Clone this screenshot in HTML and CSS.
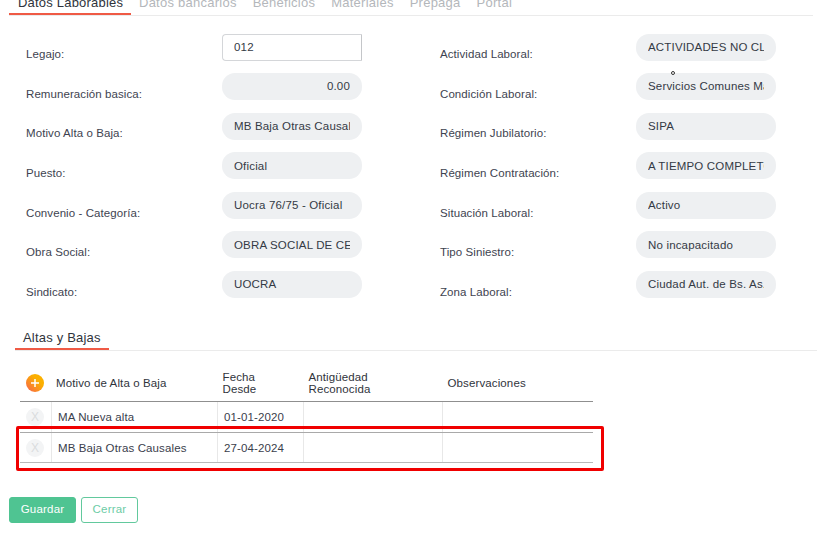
FILE: index.html
```html
<!DOCTYPE html>
<html lang="es">
<head>
<meta charset="utf-8">
<title>Datos Laborables</title>
<link rel="stylesheet" href="styles.css">
</head>
<body>
<main class="page">
  <nav class="tabs">
    <a class="tab tab-active">Datos Laborables</a>
    <a class="tab">Datos bancarios</a>
    <a class="tab">Beneficios</a>
    <a class="tab">Materiales</a>
    <a class="tab">Prepaga</a>
    <a class="tab">Portal</a>
  </nav>

  <section class="form-grid">
    <div class="field"><label>Legajo:</label><input class="input input-edit" value="012"></div>
    <div class="field"><label>Actividad Laboral:</label><input class="input" readonly value="ACTIVIDADES NO CLASIFICADAS"></div>
    <div class="field"><label>Remuneración basica:</label><input class="input input-num" readonly value="0.00"></div>
    <div class="field"><label>Condición Laboral:</label><input class="input" readonly value="Servicios Comunes Mayor de 18"></div>
    <div class="field"><label>Motivo Alta o Baja:</label><input class="input" readonly value="MB Baja Otras Causales"></div>
    <div class="field"><label>Régimen Jubilatorio:</label><input class="input" readonly value="SIPA"></div>
    <div class="field"><label>Puesto:</label><input class="input" readonly value="Oficial"></div>
    <div class="field"><label>Régimen Contratación:</label><input class="input" readonly value="A TIEMPO COMPLETO"></div>
    <div class="field"><label>Convenio - Categoría:</label><input class="input" readonly value="Uocra 76/75 - Oficial"></div>
    <div class="field"><label>Situación Laboral:</label><input class="input" readonly value="Activo"></div>
    <div class="field"><label>Obra Social:</label><input class="input" readonly value="OBRA SOCIAL DE CERAMISTAS"></div>
    <div class="field"><label>Tipo Siniestro:</label><input class="input" readonly value="No incapacitado"></div>
    <div class="field"><label>Sindicato:</label><input class="input" readonly value="UOCRA"></div>
    <div class="field"><label>Zona Laboral:</label><input class="input" readonly value="Ciudad Aut. de Bs. As."></div>
  </section>

  <div class="subtabs"><a class="subtab">Altas y Bajas</a></div>

  <table class="grid">
    <colgroup>
      <col class="c-x"><col class="c-motivo"><col class="c-fecha"><col class="c-ant"><col class="c-obs">
    </colgroup>
    <thead>
      <tr>
        <th><span class="add"><svg viewBox="0 0 18 18" width="18" height="18"><path d="M9 5v8M5 9h8" stroke="#fff" stroke-width="1.5" fill="none"/></svg></span></th>
        <th>Motivo de Alta o Baja</th>
        <th>Fecha<br>Desde</th>
        <th>Antigüedad<br>Reconocida</th>
        <th>Observaciones</th>
      </tr>
    </thead>
    <tbody>
      <tr class="row-first"><td class="cell-x"><span class="del">X</span></td><td>MA Nueva alta</td><td>01-01-2020</td><td></td><td></td></tr>
      <tr class="row-low"><td class="cell-x"><span class="del">X</span></td><td>MB Baja Otras Causales</td><td>27-04-2024</td><td></td><td></td></tr>
    </tbody>
  </table>

  <div class="actions">
    <button class="btn btn-primary" type="button">Guardar</button>
    <button class="btn btn-outline" type="button">Cerrar</button>
  </div>
</main>
<div class="highlight"></div>
<div class="cursor-dot"></div>
</body>
</html>
```

FILE: styles.css
```css
* { box-sizing: border-box; }
html, body { margin: 0; height: 100%; overflow: hidden; background: #fff; }
body { font-family: "Liberation Sans", Arial, sans-serif; color: #343a45; position: relative; }
.page { display: flex; flex-direction: column; padding-left: 9px; margin-top: -7px; }

.tabs { display: flex; width: 804px; height: 23px; border-bottom: 1px solid #ebebeb; }
.tab { font-size: 13px; letter-spacing: 0.25px; color: #b4b7bb; padding: 0 8px; line-height: 20px; height: 22px; white-space: nowrap; }
.tab-active { color: #30343c; letter-spacing: 0.2px; padding: 0 8px 0 9px; width: 122px; border-bottom: 2px solid #ef5a45; }

.form-grid { display: grid; grid-template-columns: 414px 414px; grid-auto-rows: 39.55px; margin: 17.6px 0 0 17px; }
.field { display: flex; align-items: flex-start; }
.field label { width: 196px; flex: none; font-size: 11.5px; letter-spacing: 0.08px; color: #3e4350; padding-top: 13.75px; line-height: 14px; }
.input { display: block; width: 140px; height: 27px; border: 0; outline: 0; margin: 0; border-radius: 13px; background: #eef0f2; padding: 0 12px 0.4px; font-family: inherit; font-size: 11.5px; letter-spacing: 0.17px; color: #343a45; }
.input-edit { background: #fff; border: 1px solid #d4d6d9; border-right-color: #c4c6c9; border-radius: 4px 0 0 4px; padding: 0 11px 0.4px; }
.input-num { text-align: right; }

.subtabs { margin: 18.55px 0 0 6px; width: 802px; height: 22px; border-bottom: 1px solid #ebebeb; }
.subtab { display: block; width: 94px; height: 21px; padding-left: 8px; font-size: 13px; letter-spacing: 0.2px; line-height: 17px; color: #30343c; border-bottom: 2px solid #ef5a45; }

.grid { border-collapse: collapse; table-layout: fixed; width: 573px; margin: 18px 0 0 11px; font-size: 11.5px; letter-spacing: 0.12px; }
.c-x { width: 31px; } .c-motivo { width: 166px; } .c-fecha { width: 86px; } .c-ant { width: 139px; } .c-obs { width: 151px; }
.grid th { font-weight: normal; text-align: left; color: #30343c; padding: 0 5.5px 4px; height: 33px; line-height: 12px; border-bottom: 1px solid #8f8f8f; vertical-align: middle; }
.grid th:first-child { padding: 0 6px 5px; }
.grid th:nth-child(2) { padding-left: 5px; }
.grid tbody td { padding: 0 6.5px; border-left: 1px solid #e8e8e8; border-bottom: 1px solid #b9b9b9; color: #3a404c; vertical-align: middle; }
.grid tbody td:first-child { border-left: 0; padding: 0 6px; }
.grid tbody .row-first td { height: 31px; border-bottom-color: #a9a9a9; }
.grid tbody .row-low td { height: 30px; padding-top: 1px; }
.add { display: block; width: 18px; height: 18px; border-radius: 50%; background: linear-gradient(to bottom left, #fbb000 35%, #f8604e); }
.add svg { display: block; }
.del { display: block; width: 18px; height: 18px; border-radius: 50%; background: #f3f4f5; color: #dadcde; text-align: center; font-size: 12px; line-height: 18px; letter-spacing: 0; }

.actions { display: flex; gap: 5px; margin-top: 34px; }
.btn { height: 26px; border-radius: 3px; font-family: inherit; font-size: 11.5px; letter-spacing: 0.2px; padding: 0 0 2px; }
.btn-primary { width: 67px; background: #4fc492; border: 1px solid #4fc492; color: #fff; }
.btn-outline { width: 57px; background: #fff; border: 1px solid #62c99d; color: #6dcca6; }

.highlight { position: absolute; left: 16px; top: 426px; width: 588px; height: 45px; border: 3px solid #f00000; border-radius: 2px; }
.cursor-dot { position: absolute; left: 671px; top: 71px; width: 4px; height: 4px; border: 1px solid #333; border-radius: 50%; background: #fff; }
```
